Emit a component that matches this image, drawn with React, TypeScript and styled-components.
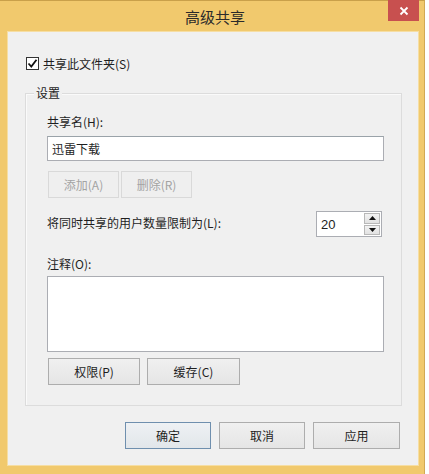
import React from "react";
import styled, { createGlobalStyle } from "styled-components";

const Global = createGlobalStyle`
  html, body { margin: 0; padding: 0; background: #ffffff; }
  body { font-family: "Noto Sans CJK SC", "Noto Sans", sans-serif; font-size: 12px; color: #1e1e1e; }
  * { box-sizing: border-box; }
`;

const Page = styled.div`
  width: 429px;
  height: 474px;
  display: flex;
  background: #ffffff;
  overflow: hidden;
`;

const Window = styled.div`
  position: relative;
  width: 425px;
  height: 474px;
  background: #f1c96d;
  border-top: 1px solid #c9a04a;
  border-right: 1px solid #d1a954;
  display: flex;
  flex-direction: column;
  padding: 0 5px 8px 7px;
`;

const TitleBar = styled.div`
  height: 30px;
  display: flex;
  align-items: center;
  justify-content: center;
  position: relative;
  flex-shrink: 0;
`;

const Title = styled.div`
  font-size: 15px;
  color: #2a2a2a;
  line-height: 20px;
  margin-left: 4px;
  margin-top: 1px;
`;

const CloseButton = styled.div`
  position: absolute;
  right: 0px;
  top: -1px;
  width: 31px;
  height: 21px;
  background: #c8504f;
  display: flex;
  align-items: center;
  justify-content: center;
`;

const Client = styled.div`
  flex: 1;
  background: #f0f0f0;
  border: 1px solid #f6dea3;
  display: flex;
  flex-direction: column;
  padding: 25px 0 0 17px;
`;

const CheckRow = styled.label`
  display: flex;
  align-items: center;
  gap: 4px;
  height: 13px;
  margin-left: 1px;
`;

const Box = styled.span`
  width: 13px;
  height: 13px;
  border: 1px solid #333333;
  background: #ffffff;
  display: flex;
  align-items: center;
  justify-content: center;
`;

const Text = styled.span`
  line-height: 16px;
  white-space: nowrap;
`;

const Group = styled.div`
  position: relative;
  margin-top: 23px;
  width: 377px;
  height: 313px;
  border: 1px solid #dcdcdc;
  box-shadow: inset 1px 1px 0 #fafafa;
  display: flex;
  flex-direction: column;
  padding: 20px 17px 0 21px;
`;

const Legend = styled.span`
  position: absolute;
  left: 8px;
  top: -9px;
  padding: 0 2px;
  background: #f0f0f0;
  line-height: 16px;
`;

const FieldLabel = styled.div<{ $mt?: number }>`
  line-height: 16px;
  margin-top: ${(p) => p.$mt ?? 0}px;
  white-space: nowrap;
`;

const TextInput = styled.div`
  margin-top: 6px;
  height: 25px;
  border: 1px solid #abadb3;
  border-top-color: #9aa3a9;
  background: #ffffff;
  display: flex;
  align-items: center;
  padding-left: 4px;
  font-size: 12px;
`;

const ButtonRow = styled.div<{ $mt: number; $gap: number }>`
  display: flex;
  gap: ${(p) => p.$gap}px;
  margin-top: ${(p) => p.$mt}px;
  margin-left: 1px;
`;

const Button = styled.div<{ $w: number; $disabled?: boolean; $default?: boolean }>`
  width: ${(p) => p.$w}px;
  height: 27px;
  display: flex;
  align-items: center;
  justify-content: center;
  font-size: 12px;
  color: ${(p) => (p.$disabled ? "#a3a3a3" : "#1e1e1e")};
  border: 1px solid
    ${(p) => (p.$disabled ? "#d9d9d9" : p.$default ? "#6f8fae" : "#adadad")};
  background: ${(p) =>
    p.$disabled
      ? "#efefef"
      : p.$default
      ? "linear-gradient(#eef1f4, #e2e6ea)"
      : "linear-gradient(#f0f0f0, #e5e5e5)"};
`;

const SpinRow = styled.div`
  margin-top: 13px;
  display: flex;
  align-items: center;
  justify-content: space-between;
  padding-right: 2px;
`;

const SpinBox = styled.div`
  width: 66px;
  height: 26px;
  border: 1px solid #abadb3;
  background: #ffffff;
  display: flex;
  align-items: stretch;
  padding: 1px 1px 1px 0;
`;

const SpinValue = styled.div`
  flex: 1;
  display: flex;
  align-items: center;
  padding-left: 4px;
  font-family: "Liberation Sans", Arial, sans-serif;
  font-size: 13px;
  color: #1e1e1e;
`;

const SpinButtons = styled.div`
  width: 16px;
  display: flex;
  flex-direction: column;
  gap: 1px;
`;

const SpinBtn = styled.div`
  flex: 1;
  background: linear-gradient(#f2f2f2, #e2e2e2);
  border: 1px solid #b8b8b8;
  display: flex;
  align-items: center;
  justify-content: center;
`;

const TextArea = styled.div`
  margin-top: 4px;
  height: 76px;
  border: 1px solid #abadb3;
  background: #ffffff;
`;

const Footer = styled.div`
  display: flex;
  justify-content: flex-end;
  gap: 8px;
  margin-top: 16px;
  padding-right: 18px;
`;

const Tri = ({ up }: { up?: boolean }) => (
  <svg width="7" height="4" viewBox="0 0 7 4">
    <path d={up ? "M0 4 L3.5 0 L7 4 Z" : "M0 0 L3.5 4 L7 0 Z"} fill="#111" />
  </svg>
);

export default function App() {
  return (
    <>
      <Global />
      <Page>
        <Window>
          <TitleBar>
            <Title>高级共享</Title>
            <CloseButton>
              <svg width="10" height="10" viewBox="0 0 10 10">
                <path d="M1.5 1.5 L8.5 8.5 M8.5 1.5 L1.5 8.5" stroke="#ffffff" strokeWidth="1.8" />
              </svg>
            </CloseButton>
          </TitleBar>
          <Client>
            <CheckRow>
              <Box>
                <svg width="11" height="11" viewBox="0 0 11 11">
                  <path d="M1.5 5.5 L4.3 8.5 L9.5 1.8" stroke="#111" strokeWidth="1.8" fill="none" />
                </svg>
              </Box>
              <Text>共享此文件夹(S)</Text>
            </CheckRow>
            <Group>
              <Legend>设置</Legend>
              <FieldLabel>共享名(H):</FieldLabel>
              <TextInput>迅雷下载</TextInput>
              <ButtonRow $mt={10} $gap={2}>
                <Button $w={71} $disabled>添加(A)</Button>
                <Button $w={71} $disabled>删除(R)</Button>
              </ButtonRow>
              <SpinRow>
                <FieldLabel $mt={-3}>将同时共享的用户数量限制为(L):</FieldLabel>
                <SpinBox>
                  <SpinValue>20</SpinValue>
                  <SpinButtons>
                    <SpinBtn><Tri up /></SpinBtn>
                    <SpinBtn><Tri /></SpinBtn>
                  </SpinButtons>
                </SpinBox>
              </SpinRow>
              <FieldLabel $mt={19}>注释(O):</FieldLabel>
              <TextArea />
              <ButtonRow $mt={6} $gap={7}>
                <Button $w={92}>权限(P)</Button>
                <Button $w={93}>缓存(C)</Button>
              </ButtonRow>
            </Group>
            <Footer>
              <Button $w={86} $default>确定</Button>
              <Button $w={86}>取消</Button>
              <Button $w={87}>应用</Button>
            </Footer>
          </Client>
        </Window>
      </Page>
    </>
  );
}
